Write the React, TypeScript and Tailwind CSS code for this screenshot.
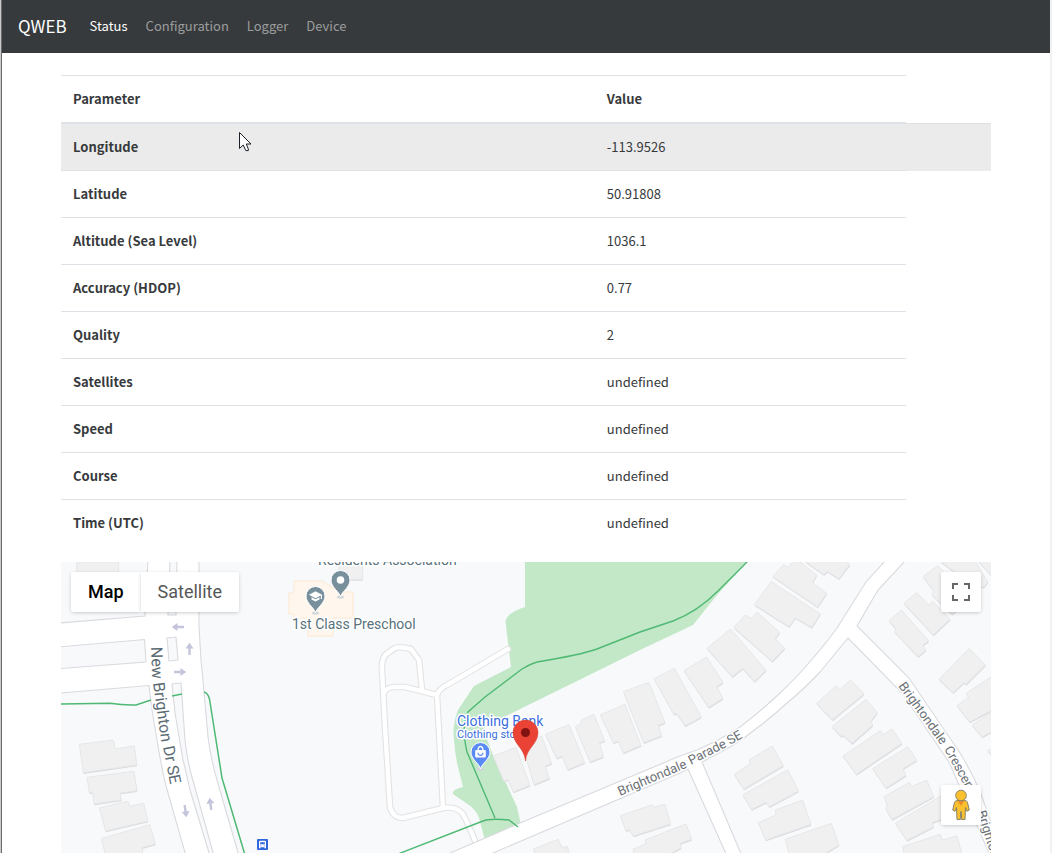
import type { ReactNode } from 'react';

type Reading = { name: string; value: string; hovered?: boolean };

const readings: Reading[] = [
  { name: 'Longitude', value: '-113.9526', hovered: true },
  { name: 'Latitude', value: '50.91808' },
  { name: 'Altitude (Sea Level)', value: '1036.1' },
  { name: 'Accuracy (HDOP)', value: '0.77' },
  { name: 'Quality', value: '2' },
  { name: 'Satellites', value: 'undefined' },
  { name: 'Speed', value: 'undefined' },
  { name: 'Course', value: 'undefined' },
  { name: 'Time (UTC)', value: 'undefined' },
];

function Navbar() {
  const link = 'px-[9px] py-2 text-[13px] leading-[22px]';
  return (
    <nav className="flex h-[53px] items-center bg-[#373a3c] px-4 pb-0.5">
      <a href="#" className="mr-3.5 text-[17px] leading-6 text-white">QWEB</a>
      <a href="#status" aria-current="page" className={`${link} text-white`}>Status</a>
      <a href="#configuration" className={`${link} text-[#9b9d9e]`}>Configuration</a>
      <a href="#logger" className={`${link} text-[#9b9d9e]`}>Logger</a>
      <a href="#device" className={`${link} text-[#9b9d9e]`}>Device</a>
    </nav>
  );
}

function Cursor() {
  return (
    <svg className="absolute top-2 left-[178px]" width="13" height="20" viewBox="0 0 13 20" aria-hidden="true">
      <path d="M.5 .5V16.5L4.2 13L6.8 18.6H9.3V17L7.3 12H12Z" fill="#fff" stroke="#1b1f2a" strokeWidth="1" />
    </svg>
  );
}

function ReadingsTable() {
  return (
    <table className="mb-4 w-full table-fixed border-collapse text-left text-[13px] leading-[22px] text-[#373a3c]">
      <colgroup>
        <col className="w-[57.4%]" />
        <col className="w-[33.5%]" />
        <col />
      </colgroup>
      <thead>
        <tr>
          <th scope="col" className="border-t border-b-2 border-[#dee2e6] p-3 font-bold">Parameter</th>
          <th scope="col" className="border-t border-b-2 border-[#dee2e6] p-3 font-bold">Value</th>
        </tr>
      </thead>
      <tbody>
        {readings.map((r) => (
          <tr key={r.name} className={r.hovered ? 'bg-[#ebebeb]' : ''}>
            <th scope="row" className="relative border-t border-[#dee2e6] p-3 font-bold">
              {r.name}
              {r.hovered && <Cursor />}
            </th>
            <td className="border-t border-[#dee2e6] p-3">{r.value}</td>
            {r.hovered && <td className="border-t border-[#dee2e6]" />}
          </tr>
        ))}
      </tbody>
    </table>
  );
}

/* Building footprints, grouped by survey block; each block has its own origin at one third scale. */
const blocks: { x: number; y: number; shapes: string[] }[] = [
  {
    x: 60, y: 560,
    shapes: [
      '50,6 176,6 176,42 50,42',
      '58,553 160,540 166,567 223,558 230,615 70,638',
      '81,652 222,634 231,692 180,699 184,720 102,732 98,697 88,698',
      '118,744 204,724 209,739 251,730 264,783 137,813',
      '124,836 269,794 286,852 246,863 249,890 138,890',
    ],
  },
  { x: 280, y: 560, shapes: ['180,0 248,0 248,58 170,58'] },
  {
    x: 440, y: 640,
    shapes: [
      '160,348 228,322 270,436 220,456 203,418 192,424',
      '245,310 305,288 335,370 316,378 328,415 282,434',
      '316,283 387,254 434,368 383,389 366,348 350,355',
      '406,260 424,250 424,240 462,223 494,303 478,308 490,350 450,366',
      '481,225 555,193 603,316 550,339 535,303 520,308',
      '550,155 627,127 675,248 655,256 665,287 611,308',
      '541,527 636,495 642,502 675,493 692,552 580,588 568,568 558,573',
      '280,627 355,598 365,622 382,620 390,650 290,650',
    ],
  },
  {
    x: 640, y: 560,
    shapes: [
      '15,840 138,792 155,838 120,850 123,863 75,890 -10,890 -22,868 18,852',
      '42,357 103,325 184,471 135,498 110,460 102,463',
      '132,332 200,291 249,368 230,380 249,415 206,442',
      '201,265 272,207 378,331 343,364 308,325 277,350',
      '281,202 316,165 332,175 352,157 419,217 405,235 434,265 397,304',
      '343,134 394,65 541,162 515,202 466,174 447,200',
      '399,50 430,14 445,22 460,4 478,4 530,45 518,68 560,100 533,141',
      '495,4 552,44 562,34 597,56 629,14 620,4',
      '530,430 588,378 600,388 632,360 672,402 577,480',
      '283,643 330,612 328,600 397,558 430,617 311,687',
      '308,705 443,630 476,693 388,740 378,727 335,748',
      '355,788 408,765 406,750 488,720 513,793 377,840',
      '436,838 574,790 597,855 540,890 450,890',
    ],
  },
  {
    x: 832, y: 560,
    shapes: [
      '273,50 316,18 420,110 360,163 300,105 305,92',
      '325,4 430,4 467,66 455,82 400,60',
      '440,4 490,4 490,60',
      '216,130 254,98 290,135 302,124 354,178 304,225',
      '171,182 208,150 290,243 272,256 282,270 258,290 188,216 193,208',
      '321,358 412,265 460,315 402,373 395,368 363,398',
      '375,437 410,412 403,400 490,342 490,445 413,486',
      '420,495 470,463 490,455 490,510 450,531',
      '467,572 490,560 490,600',
      '0,500 102,418 136,458 117,483 122,496 60,550 32,525 27,530',
      '33,588 145,512 153,525 180,506 210,550 73,643',
      '122,626 228,560 254,601 213,626 222,646 162,684',
      '156,710 232,668 238,680 284,660 305,710 180,778 160,745 167,740',
      '190,790 340,700 350,770 300,788 305,800 225,841',
      '212,860 325,823 332,840 375,828 392,890 218,890',
    ],
  },
];

function Buildings() {
  return (
    <>
      {blocks.map((b) => (
        <g key={`${b.x}-${b.y}`} transform={`translate(${b.x} ${b.y}) scale(0.3333)`}>
          {b.shapes.map((points) => (
            <g key={points}>
              <polygon points={points} transform="translate(1 4)" fill="#dadbde" />
              <polygon points={points} fill="#f0f0f0" stroke="#e6e7e9" strokeWidth="3" />
            </g>
          ))}
        </g>
      ))}
    </>
  );
}

const footways = [
  'M477 846Q467 820 462 813Q455 806 443 808L403 818Q393 818 390 807L385 727L382 670Q381 662 385 655L395 648Q400 646 411 649L419 660L422 690',
  'M384 693Q386 688 393 687L405 687L437 695',
  'M443 808L437 695Q440 688 447 685L508 649',
];

function Roads() {
  return (
    <>
      <g fill="none" strokeLinecap="round" strokeLinejoin="round">
        {footways.map((d) => <path key={d} d={d} stroke="#e2e3e5" strokeWidth="6.6" />)}
        {footways.map((d) => <path key={d} d={d} stroke="#fff" strokeWidth="4.4" />)}
      </g>
      <g fill="#fff" stroke="#d8dade" strokeWidth="1.1">
        <path d="M148 560L145 616L55 623.4V647.3L144.500 639.500L146 662L55 669V693.500L149 685.500Q151 706 157 740Q162 772 168 793L186 856H239L217 780Q211 760 208 737L204 692L201 660L199 627V560Z" />
        <path d="M448 854L520 823L680 756L697 750Q720 740 740 727Q760 712 780 693Q796 678 807 665Q824 646 837 628L866 582L886 560H906L878 590L857 626L909 678L960 753Q974 776 982 797L993 828V860L989 853L949 762L902 693L848 638L820 672Q803 690 787 703Q772 717 757 728Q744 739 730 747L702 762L742 856H727L688 769L680 773L493 853L488 856Z" />
      </g>
      <g fill="#f8f9fb" stroke="#d8dade" strokeWidth="1.1">
        <path d="M170 560L168 615H176L177 560Z" />
        <path d="M167 638L176 637L178 660L169 661Z" />
        <path d="M172 684L181 683L185 740Q188 764 192 777L214 856H210L190 790Q186 772 183 760L175 713Z" />
      </g>
      <g fill="none" stroke="#4fb974" strokeWidth="1.5" strokeLinejoin="round">
        <path d="M60 704L110 703.300Q124 705.500 136 705L151 700" />
        <path d="M172 696L182 694" />
        <path d="M204 692Q208 693 209.500 699L222 778L245 855" />
      </g>
    </>
  );
}

function TrafficArrow({ x, y, angle }: { x: number; y: number; angle: number }) {
  return (
    <path
      transform={`translate(${x} ${y}) rotate(${angle})`}
      d="M-6 -1.200H.5V-4L6.300 0L.5 4V1.200H-6Z"
      fill="#c4c4dc"
    />
  );
}

type Label = { text: string; x: number; y: number; angle: number };

const driveLabels: Label[] = [
  { text: 'New', x: 151, y: 647, angle: 88 },
  { text: 'Brighton', x: 153, y: 683, angle: 82 },
  { text: 'Dr SE', x: 163, y: 747, angle: 79 },
];

const streetLabels: Label[] = [
  { text: 'Brightondale', x: 620, y: 796, angle: -23 },
  { text: 'Parade', x: 691, y: 765, angle: -27 },
  { text: 'SE', x: 730, y: 745, angle: -30 },
  { text: 'Brightondale', x: 898, y: 686, angle: 54 },
  { text: 'Crescent', x: 944, y: 749, angle: 61 },
  { text: 'Brightondale', x: 977, y: 812, angle: 72 },
];

function RoadLabels({ labels }: { labels: Label[] }) {
  return (
    <>
      {labels.map((l) => (
        <text key={`${l.x}-${l.y}`} transform={`translate(${l.x} ${l.y}) rotate(${l.angle})`}>{l.text}</text>
      ))}
    </>
  );
}

function PlacePin({ x, y, color, children }: { x: number; y: number; color: string; children: ReactNode }) {
  return (
    <g transform={`translate(${x} ${y})`}>
      <ellipse cx="0" cy="17" rx="3.500" ry="1.500" fill="#cfd4d8" />
      <path d="M0 17C-1.200 11.500 -9.500 7.500 -9.500 0A9.500 9.500 0 0 1 9.500 0C9.500 7.500 1.200 11.500 0 17Z" fill={color} stroke="#fff" strokeWidth="1" />
      {children}
    </g>
  );
}

function MapDrawing() {
  return (
    <svg className="absolute inset-0 h-full w-full font-[Roboto,sans-serif]" role="img" aria-label="Map of the receiver position">
      <g transform="translate(-61 -562)">
        <rect x="61" y="562" width="930" height="600" fill="#f8f9fb" />
        <path d="M525 560V607Q506 613 505.500 622L511 667L474 686L458 710Q452 725 454 740Q455 755 458 767L463 787Q451 790 453 794L466 803Q476 809 479 818L485 840L521 825L517 807L493 755L488 742L484 728L502 718L640 650L693 625L717 595L749 560Z" fill="#c3e8c7" />
        <Buildings />
        <Roads />
        <path d="M749 560L718 591Q697 612 673 621L640 632L597 649Q580 655 537 662Q530 664 522 669L485 697L468 712Q461 726 467 752L495 818M398 854L483 821Q490 818 509 820L518 827" fill="none" stroke="#4fb974" strokeWidth="1.4" />
        <path d="M294 581H322L340 592H353V618H333V636H308V618H294V614H289V593H294Z" fill="#fff6ee" stroke="#fde8d0" />
        <TrafficArrow x={178} y={627} angle={180} />
        <TrafficArrow x={180} y={672} angle={0} />
        <TrafficArrow x={189.5} y={649} angle={-90} />
        <TrafficArrow x={185.5} y={811} angle={82} />
        <TrafficArrow x={210.5} y={804} angle={-98} />

        <g stroke="#fff" strokeWidth="3" strokeLinejoin="round" className="[paint-order:stroke]">
          <g fontSize="16" fill="#5b6b73"><RoadLabels labels={driveLabels} /></g>
          <g fontSize="13" fill="#6c7176"><RoadLabels labels={streetLabels} /></g>
          <g fontSize="14" fill="#58717b">
            <text x="318" y="565">Residents Association</text>
            <text x="292" y="629">1st Class Preschool</text>
          </g>
          <g fill="#3b6fe0">
            <text x="457" y="726" fontSize="14">Clothing Bank</text>
            <text x="457" y="738" fontSize="11">Clothing store</text>
          </g>
        </g>

        <PlacePin x={340.5} y={580} color="#78909c">
          <circle r="3.800" fill="#fff" />
        </PlacePin>
        <PlacePin x={315.5} y={596} color="#78909c">
          <path d="M-6.500 -1.300L0 -4.800L6.500 -1.300V3H5.300V-.6L0 2.200ZM-4 1.200L0 3.300L4 1.200V3.600L0 5.600L-4 3.600Z" fill="#fff" />
        </PlacePin>
        <PlacePin x={480.5} y={752} color="#5a8bf4">
          <rect x="-5.300" y="-2" width="10.600" height="7.600" rx="1" fill="#fff" />
          <path d="M-2.300 -2V-3.200A2.300 2.300 0 0 1 2.300 -3.200V-2" fill="none" stroke="#fff" strokeWidth="1.300" />
          <path d="M-2.500 .8A2.500 2.500 0 0 0 2.500 .8" fill="none" stroke="#5a8bf4" strokeWidth="1.200" />
        </PlacePin>

        <path d="M525.500 761C524.500 748 513 744 513 732.500A12.500 12.500 0 0 1 538 732.500C538 744 526.500 748 525.500 761Z" fill="#ea4335" stroke="#d23a2d" strokeWidth=".5" />
        <circle cx="525.500" cy="732.500" r="4.500" fill="#811411" />

        <g transform="translate(257 839)">
          <rect width="11" height="11" rx="1" fill="#2f66dd" />
          <path d="M2 3Q2 1.800 3.200 1.800H7.800Q9 1.800 9 3V9.300H7.500V8.300H3.500V9.300H2Z" fill="#fff" />
          <path d="M3.200 3.200H7.800V5.300H3.200ZM3.200 6.400H4.300V7.300H3.200ZM6.700 6.400H7.800V7.300H6.700Z" fill="#2f66dd" />
        </g>
      </g>
    </svg>
  );
}

function MapPanel() {
  const button = 'bg-white shadow-[0_1px_4px_-1px_rgba(0,0,0,0.3)]';
  return (
    <section className="relative min-h-[291px] flex-1 overflow-hidden bg-[#f8f9fb] font-[Roboto,sans-serif]">
      <MapDrawing />
      <div className="absolute top-2.5 left-2.5 flex text-[18px] leading-10">
        <button type="button" aria-pressed="true" className={`${button} rounded-l-xs px-[17px] font-medium text-black`}>Map</button>
        <button type="button" aria-pressed="false" className={`${button} rounded-r-xs px-[17px] text-[#565656]`}>Satellite</button>
      </div>
      <button type="button" aria-label="Toggle fullscreen view" className={`${button} absolute top-2.5 right-2.5 grid size-10 place-items-center rounded-xs`}>
        <svg width="18" height="18" viewBox="0 0 18 18" fill="#666">
          <path d="M0 0V6H2V2H6V0ZM16 0H12V2H16V6H18V0ZM16 16H12V18H18V12H16ZM2 12H0V18H6V16H2Z" />
        </svg>
      </button>
      <button type="button" aria-label="Open Street View" className={`${button} absolute right-2.5 bottom-7 grid size-10 place-items-center rounded-xs`}>
        <svg width="18" height="32" viewBox="0 0 18 32">
          <path d="M5 11.500H13Q15 11.500 15.600 14L17.300 21L15 22.300L13.500 18.500L13 30.500H9.700L9.300 22.500H8.700L8.300 30.500H5L4.500 18.500L3 22.300L.7 21L2.400 14Q3 11.500 5 11.500Z" fill="#fbc02d" stroke="#8a8468" strokeWidth="1" />
          <path d="M5.500 11.500H12.500L9 17Z" fill="#e98b2a" />
          <circle cx="9" cy="6.500" r="5.300" fill="#fbc02d" stroke="#8a8468" strokeWidth="1" />
        </svg>
      </button>
    </section>
  );
}

export default function App() {
  return (
    <div className="border-l border-[#c9c9c9] bg-white font-['Noto_Sans_CJK_SC',sans-serif]">
      <div className="flex min-h-screen flex-col border-r-2 border-l border-r-[#f1f1f1] border-l-[#6b6b6b]">
        <Navbar />
        <main className="mx-auto flex w-full max-w-[930px] flex-1 flex-col pt-[22px]">
          <ReadingsTable />
          <MapPanel />
        </main>
      </div>
    </div>
  );
}
